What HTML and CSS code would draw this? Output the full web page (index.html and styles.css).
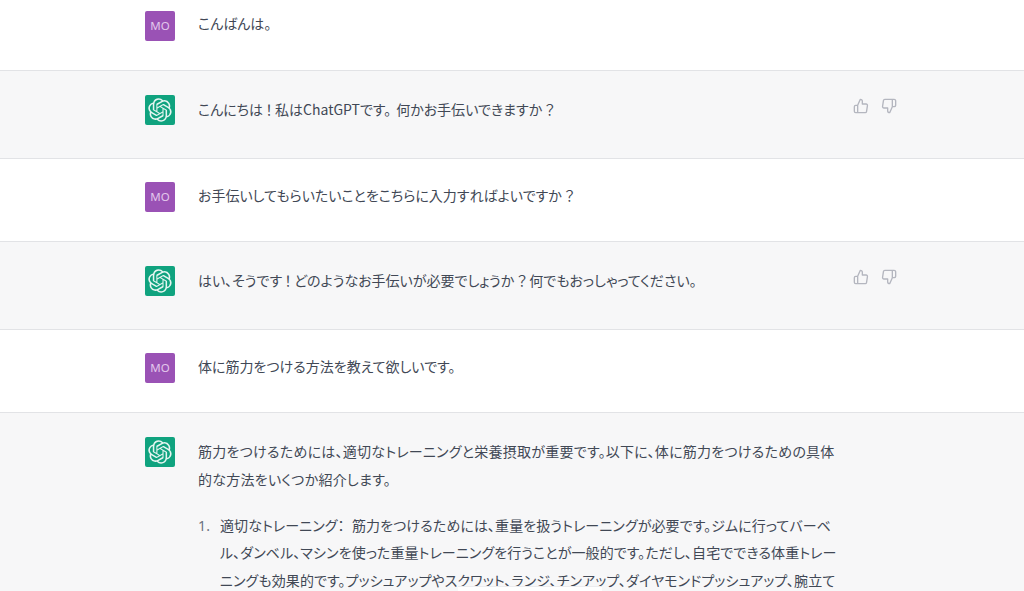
FILE: index.html
```html
<!DOCTYPE html>
<html lang="ja">
<head>
    <meta charset="UTF-8">
    <meta name="viewport" content="width=device-width, initial-scale=1.0">
    <title>ChatGPT</title>
    <link rel="stylesheet" href="styles.css">
</head>
<body>
    <svg class="icon-defs" width="0" height="0" aria-hidden="true">
        <defs>
            <symbol id="gpt-logo" viewBox="0 0 41 41">
                <path fill="currentColor" d="M37.532 16.87a9.963 9.963 0 0 0-.856-8.184 10.078 10.078 0 0 0-10.855-4.835A9.964 9.964 0 0 0 18.306.5a10.079 10.079 0 0 0-9.614 6.977 9.967 9.967 0 0 0-6.664 4.834 10.08 10.08 0 0 0 1.24 11.817 9.965 9.965 0 0 0 .856 8.185 10.079 10.079 0 0 0 10.855 4.835 9.965 9.965 0 0 0 7.516 3.35 10.078 10.078 0 0 0 9.617-6.981 9.967 9.967 0 0 0 6.663-4.834 10.079 10.079 0 0 0-1.243-11.813ZM22.498 37.886a7.474 7.474 0 0 1-4.799-1.735c.061-.033.168-.091.237-.134l7.964-4.6a1.294 1.294 0 0 0 .655-1.134V19.054l3.366 1.944a.12.12 0 0 1 .066.092v9.299a7.505 7.505 0 0 1-7.49 7.496ZM6.392 31.006a7.471 7.471 0 0 1-.894-5.023c.06.036.162.099.237.141l7.964 4.6a1.297 1.297 0 0 0 1.308 0l9.724-5.614v3.888a.12.12 0 0 1-.048.103l-8.051 4.649a7.504 7.504 0 0 1-10.24-2.744ZM4.297 13.62A7.469 7.469 0 0 1 8.2 10.333c0 .068-.004.19-.004.274v9.201a1.294 1.294 0 0 0 .654 1.132l9.723 5.614-3.366 1.944a.12.12 0 0 1-.114.01L7.04 23.856a7.504 7.504 0 0 1-2.743-10.237Zm27.658 6.437-9.724-5.615 3.367-1.943a.121.121 0 0 1 .113-.01l8.052 4.648a7.498 7.498 0 0 1-1.158 13.528v-9.476a1.293 1.293 0 0 0-.65-1.132Zm3.35-5.043c-.059-.037-.162-.099-.236-.141l-7.965-4.6a1.298 1.298 0 0 0-1.308 0l-9.723 5.614v-3.888a.12.12 0 0 1 .048-.103l8.05-4.645a7.497 7.497 0 0 1 11.135 7.763Zm-21.063 6.929-3.367-1.944a.12.12 0 0 1-.065-.092v-9.299a7.497 7.497 0 0 1 12.293-5.756 6.94 6.94 0 0 0-.236.134l-7.965 4.6a1.294 1.294 0 0 0-.654 1.132l-.006 11.225Zm1.829-3.943 4.33-2.501 4.332 2.5v5l-4.331 2.5-4.331-2.5V18Z"/>
            </symbol>
            <symbol id="thumb-up" viewBox="0 0 24 24">
                <path d="M14 9V5a3 3 0 0 0-3-3l-4 9v11h11.28a2 2 0 0 0 2-1.7l1.38-9a2 2 0 0 0-2-2.3zM7 22H4a2 2 0 0 1-2-2v-7a2 2 0 0 1 2-2h3"/>
            </symbol>
            <symbol id="thumb-down" viewBox="0 0 24 24">
                <path d="M10 15v4a3 3 0 0 0 3 3l4-9V2H5.72a2 2 0 0 0-2 1.7l-1.38 9a2 2 0 0 0 2 2.3zm7-13h2.67A2.31 2.31 0 0 1 22 4v7a2.31 2.31 0 0 1-2.33 2H17"/>
            </symbol>
        </defs>
    </svg>

    <!-- Conversation -->
    <div class="row row-first">
        <div class="row-inner">
            <div class="avatar avatar-user">MO</div>
            <div class="message"><p>こんばんは。</p></div>
        </div>
    </div>

    <div class="row row-bot">
        <div class="row-inner">
            <div class="avatar avatar-bot"><svg class="logo"><use href="#gpt-logo"/></svg></div>
            <div class="message"><p>こんにちは<span class="punct">！</span>私はChatGPTです<span class="stop">。</span>何かお手伝いできますか<span class="punct">？</span></p></div>
            <div class="feedback">
                <svg class="thumb"><use href="#thumb-up"/></svg>
                <svg class="thumb"><use href="#thumb-down"/></svg>
            </div>
        </div>
    </div>

    <div class="row">
        <div class="row-inner">
            <div class="avatar avatar-user">MO</div>
            <div class="message"><p>お手伝いしてもらいたいことをこちらに入力すればよいですか<span class="punct">？</span></p></div>
        </div>
    </div>

    <div class="row row-bot">
        <div class="row-inner">
            <div class="avatar avatar-bot"><svg class="logo"><use href="#gpt-logo"/></svg></div>
            <div class="message"><p>はい、そうです<span class="punct">！</span>どのようなお手伝いが必要でしょうか<span class="punct">？</span>何でもおっしゃってください。</p></div>
            <div class="feedback">
                <svg class="thumb"><use href="#thumb-up"/></svg>
                <svg class="thumb"><use href="#thumb-down"/></svg>
            </div>
        </div>
    </div>

    <div class="row">
        <div class="row-inner">
            <div class="avatar avatar-user">MO</div>
            <div class="message"><p>体に筋力をつける方法を教えて欲しいです。</p></div>
        </div>
    </div>

    <div class="row row-bot row-last">
        <div class="row-inner">
            <div class="avatar avatar-bot"><svg class="logo"><use href="#gpt-logo"/></svg></div>
            <div class="message message-long">
                <p>筋力をつけるためには、適切なトレーニングと栄養摂取が重要です。以下に、体に筋力をつけるための具体<br>的な方法をいくつか紹介します。</p>
                <ol class="steps">
                    <li class="step">
                        <span class="step-num">1.</span>
                        <span class="step-text">適切なトレーニング： 筋力をつけるためには、重量を扱うトレーニングが必要です。ジムに行ってバーベル、ダンベル、マシンを使った重量トレーニングを行うことが一般的です。ただし、自宅でできる体重トレーニングも効果的です。プッシュアップやスクワット、ランジ、チンアップ、ダイヤモンドプッシュアップ、腕立て</span>
                    </li>
                </ol>
            </div>
        </div>
    </div>

    <div class="cut-box"></div>
</body>
</html>
```

FILE: styles.css
```css
html, body {
    margin: 0;
    height: 591px;
    overflow: hidden;
}
body {
    position: relative;
    background-color: #fff;
    color: #414855;
    font-family: "Noto Sans CJK JP", "Noto Sans", sans-serif;
    font-size: 14px;
    font-feature-settings: "palt";
    line-height: 28px;
}
.icon-defs {
    position: absolute;
}
.row {
    border-bottom: 1px solid #e2e3e6;
    padding: 23.5px 0 29px;
}
.row-first {
    padding-top: 11px;
}
.row-bot {
    background-color: #f7f7f8;
    padding-bottom: 33px;
}
.row-last {
    border-bottom: none;
}
.row-inner {
    display: flex;
    width: 752px;
    margin-left: 145px;
}
.avatar {
    width: 30px;
    height: 30px;
    flex-shrink: 0;
    border-radius: 2px;
    display: flex;
    align-items: center;
    justify-content: center;
    color: #e6f5f1;
}
.avatar-user {
    background-color: #9a52b5;
    color: #e3c8ec;
    font-family: "Noto Sans", sans-serif;
    font-size: 11.5px;
}
.avatar-bot {
    background-color: #10a37f;
}
.logo {
    width: 24px;
    height: 24px;
}
.message {
    width: 642px;
    margin-left: 23px;
}
.message p {
    margin: 0;
}
.row:not(.row-bot) .message {
    margin-top: -1px;
}
.row-first:not(.row-bot) .message {
    margin-top: -2px;
}
.message-long {
    letter-spacing: 0.25px;
}
.punct {
    margin: 0 2.5px;
}
.stop {
    margin-right: 5px;
}
.steps {
    list-style: none;
    margin: 19px 0 0;
    padding: 0;
    line-height: 27.5px;
}
.step {
    display: flex;
}
.step-num {
    flex: 0 0 22px;
    color: #6b7280;
    font-family: "Noto Sans", sans-serif;
}
.step-text {
    width: 622px;
    letter-spacing: 0.1px;
    word-spacing: 4px;
}
.feedback {
    display: flex;
    gap: 12px;
    margin-left: 13px;
    padding-top: 3px;
}
.thumb {
    width: 16px;
    height: 16px;
    fill: none;
    stroke: #b4b6bf;
    stroke-width: 2;
    stroke-linecap: round;
    stroke-linejoin: round;
}
/* white box that starts over the last line of text */
.cut-box {
    position: absolute;
    left: 458px;
    top: 586px;
    width: 144px;
    height: 10px;
    background-color: #fff;
    border-top: 1px solid #ececee;
}
```
